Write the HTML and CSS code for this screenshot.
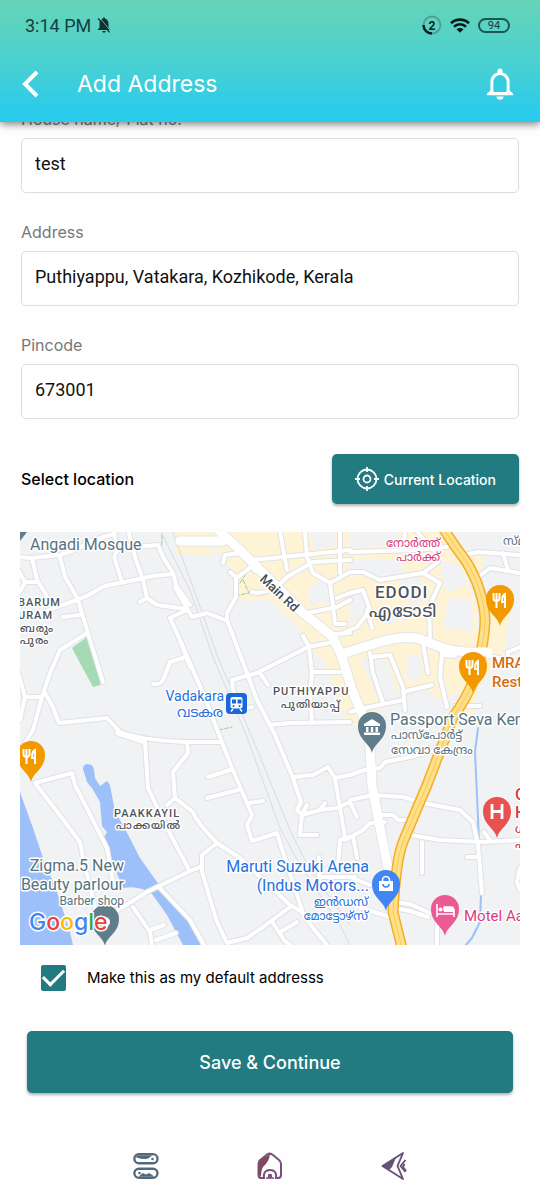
FILE: index.html
```html
<!DOCTYPE html>
<html lang="en">
<head>
<meta charset="utf-8">
<meta name="viewport" content="width=device-width, initial-scale=1">
<title>Add Address</title>
<link rel="stylesheet" href="styles.css">
</head>
<body>
<div class="screen">
  <header class="top">
    <div class="status">
      <span class="time">3:14 PM</span>
      <svg class="muted" viewBox="0 0 14 16" width="14" height="16" aria-hidden="true"><path d="M7 0.500a1.300 1.300 0 0 1 1.300 1.300C10.600 2.600 11.500 4.500 11.500 7v3.500L13.500 13H.5l2-2.500V7c0-2.500 1-4.400 3.200-5.200A1.300 1.300 0 0 1 7 .5ZM5.300 14h3.400a1.700 1.700 0 0 1-3.400 0Z" fill="#12302f"/><path d="M3 1 13.500 14" stroke="#5ed2c1" stroke-width=".8"/><path d="M1.200 1.500 12.500 15.300" stroke="#12302f" stroke-width="1.300"/></svg>
      <span class="status-right">
        <svg viewBox="0 0 20 20" width="20" height="20" aria-hidden="true"><circle cx="10" cy="10" r="8.500" fill="none" stroke="#4d9f97" stroke-width="1.800"/><path d="M1.500 10A8.500 8.500 0 0 0 10 18.500" fill="none" stroke="#0b2020" stroke-width="2.500"/><text class="ring-text" x="10" y="14.500" text-anchor="middle">2</text></svg>
        <svg viewBox="0 0 20 15" width="20" height="15" aria-hidden="true"><g fill="none" stroke="#061818" stroke-width="2.600"><path d="M1 5.200C6 .4 14 .4 19 5.200"/><path d="M4 8.700c3.500-3.200 8.500-3.200 12 0"/></g><path d="M6.500 11.300c2-1.700 5-1.700 7 0L10 14.800Z" fill="#061818"/></svg>
        <span class="battery">94</span>
      </span>
    </div>
    <div class="bar">
      <button class="icon-btn" type="button" aria-label="Back"><svg viewBox="0 0 18 28" width="18" height="28"><path d="M16 2 4 14 16 26" fill="none" stroke="#fff" stroke-width="4"/></svg></button>
      <h1 class="title">Add Address</h1>
      <button class="icon-btn" type="button" aria-label="Notifications"><svg viewBox="0 0 28 32" width="28" height="32"><path d="M6 26V13.500a8 8 0 0 1 16 0V26" fill="none" stroke="#fff" stroke-width="3.200"/><path d="M1 27.200v-1.600l3.500-3h19l3.500 3v1.600Z" fill="#fff"/><path d="M7.600 14a6.400 6.400 0 0 1 12.800 0v10H7.600Z" fill="#33cde2"/><circle cx="14" cy="3" r="2.500" fill="#fff"/><path d="M10.500 28.500h7a3.500 3.300 0 0 1-7 0Z" fill="#fff"/></svg></button>
    </div>
  </header>

  <main class="content">
    <form class="form">
      <div class="field"><label class="label" for="house">House name/ Flat no.</label><input class="input" id="house" type="text" value="test"></div>
      <div class="field"><label class="label" for="address">Address</label><input class="input" id="address" type="text" value="Puthiyappu, Vatakara, Kozhikode, Kerala"></div>
      <div class="field"><label class="label" for="pincode">Pincode</label><input class="input" id="pincode" type="text" value="673001"></div>

      <div class="location">
        <h2 class="location-title">Select location</h2>
        <button class="btn btn-location" type="button">
          <svg viewBox="0 0 24 24" width="24" height="24" fill="none" stroke="#fff" stroke-width="1.800" aria-hidden="true"><circle cx="12" cy="12" r="9.500"/><circle cx="12" cy="12" r="3.500"/><path d="M12 0v5M12 19v5M0 12h5M19 12h5"/></svg>
          Current Location
        </button>
      </div>

      <svg class="map" viewBox="20 532 500 413" role="img" aria-label="Map of Puthiyappu, Vatakara">
        <defs>
          <g id="streets">
            <path d="M18 557 32 558 60 555Q75 551 84 545T115 534M32 558 37 580 48 598M18 570 25 582 37 582M25 582 20 592M60 557 65 577Q73 590 78 600L87 630 103 682M48 610 77 600Q90 595 97 590T120 583L153 576 173 574M63 617 80 615M113 530 118 550Q113 556 115 560L122 582M128 530 135 557 143 580 147 598 140 602M147 598 157 605 187 609M134 547 158 545 163 557 173 573 177 587 190 605M187 610 170 618 180 640 190 667M183 658 170 662 163 680Q160 685 153 684M87 633 60 650 50 673 42 697 33 730 25 743M18 672 25 697 42 697M25 697 20 720M45 693 53 707 59 723 107 718 120 732Q140 740 185 742H220"/>
            <path d="M230 572 236 577V597L227 613V620L247 673 257 700 275 735 293 778 301 802 297 810 302 815 300 835H317M175 587 192 617 207 613 225 620M223 563 225 555 240 553M238 577 252 566M252 707Q245 710 240 703L233 690 232 680 257 673 308 647 333 642M260 673 268 685M303 636 309 647 312 673 310 693 312 723M312 672H340M270 725 290 723 350 722M307 613 337 607 350 600M252 560 283 557 350 550M280 532 287 570M305 532 307 557 313 573 330 583 335 623M252 592Q270 596 287 577L313 562 350 560M340 532V573M330 583 350 572M337 598 350 593M335 634 350 633M335 624H345M250 562 255 571"/>
            <path d="M180 640 203 693 220 737 232 768 252 815 247 825 252 841 277 833 287 865 302 910M208 777 230 770M207 798 238 790M248 803 263 801M187 742 188 753 180 763 173 772 175 798 167 805M175 798 193 812Q195 820 217 843L240 858 290 905 302 912 313 928 327 945M217 843 202 855V872L217 922 227 943 247 938 263 927 290 907M273 923 284 940 290 945M280 932 297 922M293 777 313 775 328 767 335 778 350 775M335 778 340 808 345 837M302 815 320 810 337 808 350 802M302 815 307 805M320 810 325 803M338 865 340 840 350 837M320 877H355M319 857V885"/>
            <path d="M35 783 52 805 80 842 83 858 97 915M35 783 72 773 75 785 107 848 113 882M117 733 143 742M145 742 148 788 167 828 188 868M110 915 147 892 188 872 202 866M133 907 150 932 152 945M150 930 164 925M156 940 176 933M160 888 190 920 204 945"/>
            <path d="M350 552 417 550 447 547M350 572 363 572 380 580 423 573 438 562M423 573 440 583 429 607 430 637M350 593 363 590 370 610 357 627 345 632M402 550 405 533M418 533 438 555M370 653 373 673 383 703M372 657 390 655 403 687 405 710M403 692 432 685M403 700 370 707 350 712M423 643 428 673M442 653 440 677 447 707M445 655 455 656M367 610 372 628M465 555 477 552 520 555M503 553 508 570M478 577 490 568 520 573M520 647 508 652V665M455 706H480M482 655 520 662"/>
            <path d="M350 775 365 770 380 768 385 762 410 757 435 750M350 800 373 795 403 797 423 803 460 810 473 822 478 845 482 893M410 835 440 840 483 842 520 840M422 842V873M467 857H479M382 815H393L398 820H410M345 840 363 830 370 823 385 822M353 836 357 858M350 877 370 885M393 902 410 904 430 913M393 908 410 911 428 917M437 922V945M345 903 390 917M520 868 517 882 520 890M484 832 490 840M350 802 357 817"/>
          </g>
          <g id="avenues"><path d="M180 541H223M218 530 240 550 263 573 303 613 333 637 342 657 352 690 369 730 372 785 380 828 388 868 393 903M345 653 380 642Q400 636 417 638L443 648Q460 653 483 652"/></g>
          <path id="highway" d="M443 528Q456 548 463 557T477 583Q485 605 485 620T477 673Q466 700 453 717L427 785Q410 825 403 842T393 912L402 948"/>
          <path id="marker" d="M0 20C-2 10-14 7-14-7A14 14 0 0 1 14-7C14 7 2 10 0 20Z"/>
        </defs>

        <path class="land" d="M20 532H520V945H20Z"/>
        <g class="built">
          <path d="M176 532H443L462 565 478 610V670L462 692 440 700 423 688H400L375 715 350 728 340 706 330 672 320 660 297 625 270 600H238V575L220 556 176 554Z"/>
          <path d="M472 645 505 640 500 665 480 680 473 720 455 735 462 700ZM465 550 485 555 480 575ZM490 590 510 610 505 650 485 640Z"/>
        </g>
        <g class="land">
          <path d="M206 545 222 552 218 557ZM310 532H336V545L315 550ZM350 532H400L395 545 350 548ZM310 585 325 580 332 602 310 605ZM350 560 400 560 405 575 380 577 350 570ZM350 595 362 592 368 610 350 625ZM400 580 420 577 427 600 412 605 400 595ZM440 560 460 565 467 585 450 592 444 588ZM448 598 472 600 473 632 443 628ZM360 658 388 662 398 700 380 705ZM408 655 420 655 422 680 405 678ZM314 655 325 660V680H314ZM380 614 420 604 422 615 385 625Z"/>
        </g>
        <path class="park" d="M72 648 87 637 101 680 100 685 93 687 80 663Z"/>
        <path class="trail" d="M240 583 247 572M243 580 249 593 239 595M162 535V545M219 730 232 727"/>
        <g class="water">
          <path d="M20 792 33 828 43 858 57 892 70 932 73 945H20Z"/>
          <path d="M83 769Q83 764 88 764T94 770L95 778 100 786 107 781 110 785 115 812 123 825 140 858 157 882 190 920 203 945H183L167 915 152 894Q140 885 123 888L108 852 102 840 107 832 102 826 100 802 92 788 87 782Z"/>
        </g>
        <path class="stream" d="M478 728 475 752 478 818 481 895 480 922 472 938 466 945"/>
        <path class="rail" d="M160 530 190 590 213 657 247 737 280 828 300 865 340 925 350 945M172 530 196 595 217 655 256 747 290 830 310 870 350 925"/>

        <use class="street-edge" href="#streets"/>
        <use class="avenue-edge" href="#avenues"/>
        <use class="street" href="#streets"/>
        <use class="avenue" href="#avenues"/>
        <use class="highway-edge" href="#highway"/>
        <use class="highway" href="#highway"/>
        <use class="highway-line" href="#highway"/>
        <path class="avenue" d="M478 652H488"/>

        <path d="M20 532H27L20 541Z" fill="#607d8b"/>
        <g class="pin-food"><use href="#marker" x="500" y="606"/><use href="#marker" x="473" y="673"/><use href="#marker" x="31" y="762"/></g>
        <g fill="none" stroke="#fff" stroke-width="2">
          <path id="fork" d="M493.500 593v5q0 3 3 3t3-3v-5M496.500 593V608M505 608V594q-3 1-3 8h3"/>
          <use href="#fork" x="-27" y="67"/><use href="#fork" x="-470" y="156"/>
        </g>
        <use href="#marker" x="372" y="733" fill="#607d8b"/>
        <path d="M364 724 372 719 380 724V726H364ZM366 727H368.500V732H366ZM370.800 727H373.200V732H370.800ZM375.500 727H378V732H375.500ZM364 732.500H380V735H364Z" fill="#fff"/>
        <use href="#marker" x="386" y="891" fill="#4285f4"/>
        <path d="M379 881H393V891H379Z" fill="#fff"/><path d="M382.500 881v-1a3.500 3.500 0 0 1 7 0v1" fill="none" stroke="#fff" stroke-width="1.600"/><path d="M383 884a3 3 0 0 0 6 0" fill="none" stroke="#4285f4" stroke-width="1.600"/>
        <use href="#marker" x="497" y="818" fill="#ea5050"/><path d="M492 804V819M502 804V819M492 811.500H502" stroke="#fff" stroke-width="2.800"/>
        <use href="#marker" x="445" y="916" fill="#ec5a95"/><path d="M437 904V917M437 914H454V917M454 914V910H444V907H451Q454 907 454 911" fill="none" stroke="#fff" stroke-width="1.600"/><path d="M444 907H451Q454 908 454 912H444Z" fill="#fff"/><circle cx="440.500" cy="909.500" r="2" fill="#fff"/>
        <use href="#marker" x="105" y="926" fill="#607d8b"/><circle cx="105" cy="922" r="5" fill="#fff"/>
        <rect x="226" y="693" width="21" height="21" rx="4" fill="#1a66dc"/><rect x="230.500" y="697" width="12" height="11.500" rx="2" fill="#fff"/><path d="M232 699.500H236V703.500H232ZM237.500 699.500H241.500V703.500H237.500Z" fill="#1a66dc"/><circle cx="233.500" cy="706" r="1" fill="#1a66dc"/><circle cx="239.500" cy="706" r="1" fill="#1a66dc"/><path d="M233 709 231 711.500M240 709 242 711.500" stroke="#fff" stroke-width="1.500"/>

        <g class="place slate">
          <text x="30" y="550">Angadi Mosque</text>
          <text x="124" y="871" text-anchor="end">Zigma.5 New</text>
          <text x="124" y="890" text-anchor="end">Beauty parlour</text>
          <text class="small" x="124" y="905" text-anchor="end">Barber shop</text>
          <text x="390" y="725">Passport Seva Ken</text>
          <text class="small" x="391" y="739">പാസ്പോർട്ട്</text>
          <text class="small" x="391" y="754">സേവാ കേന്ദ്രം</text>
          <text class="small" x="503" y="545">സ്മാ</text>
        </g>
        <g class="place area">
          <text x="18" y="606">BARUM</text><text x="18" y="619">URAM</text>
          <text x="20" y="632">ബരും</text><text x="20" y="644">പുരം</text>
          <text x="273" y="695">PUTHIYAPPU</text><text x="281" y="708">പുതിയാപ്പ്</text>
          <text x="114" y="817">PAAKKAYIL</text><text x="116" y="829">പാക്കയിൽ</text>
          <text class="big" x="375" y="598">EDODI</text><text class="big" x="369" y="617">എടോടി</text>
        </g>
        <text class="place road-name" transform="translate(259 580) rotate(43)">Main Rd</text>
        <g class="place blue">
          <text class="mid" x="224" y="701" text-anchor="end">Vadakara</text><text class="mid" x="177" y="717">വടകര</text>
          <text x="369" y="872" text-anchor="end">Maruti Suzuki Arena</text>
          <text x="369" y="891" text-anchor="end">(Indus Motors...</text>
          <text class="small" x="368" y="906" text-anchor="end">ഇൻഡസ്</text>
          <text class="small" x="368" y="920" text-anchor="end">മോട്ടോഴ്സ്</text>
        </g>
        <g class="place orange"><text x="492" y="668">MRA</text><text x="492" y="687">Rest</text></g>
        <g class="place red"><text x="515" y="800">G</text><text x="515" y="818">H</text><text class="small" x="515" y="833">ഗ</text><text class="small" x="515" y="848">ഹ</text></g>
        <g class="place pink"><text class="lodging" x="464" y="921">Motel Aaram</text><text class="small" x="440" y="547" text-anchor="end">നോർത്ത്</text><text class="small" x="440" y="561" text-anchor="end">പാർക്ക്</text></g>
        <text class="google" x="29" y="930"><tspan class="g-blue">G</tspan><tspan class="g-red">o</tspan><tspan class="g-yellow">o</tspan><tspan class="g-blue">g</tspan><tspan class="g-green">l</tspan><tspan class="g-red">e</tspan></text>
      </svg>

      <div class="default-row">
        <input class="check" id="default" type="checkbox" checked>
        <label class="check-label" for="default">Make this as my default addresss</label>
      </div>
      <button class="btn btn-save" type="submit">Save &amp; Continue</button>
    </form>
  </main>

  <nav class="system-nav" aria-label="System">
    <button class="icon-btn" type="button" aria-label="Recent apps"><svg viewBox="0 0 24 26" width="26" height="28"><g fill="none" stroke="#526b7c" stroke-width="2.200"><rect x="1.200" y="2" width="21.500" height="8.500" rx="4.200"/><rect x="1.200" y="15.500" width="21.500" height="8.500" rx="4.200"/></g><path d="M3 3H18Q15 6 12 6.500T3 5ZM5 23 9 19.500 12 21 15 19.500 20 23Z" fill="#526b7c"/><circle cx="18" cy="6.500" r="1.200" fill="#526b7c"/><circle cx="6" cy="19.500" r="1.200" fill="#526b7c"/></svg></button>
    <button class="icon-btn" type="button" aria-label="Home"><svg viewBox="0 0 26 28" width="26" height="28"><path d="M2 9 10 2.500Q13 .5 16 3L22 8Q24 9.500 24 12V23Q24 26 21 26H19Q20 18 13 18T7 26H4Q1.500 26 1.500 23V12Q1.500 10 3 8.500Z" fill="none" stroke="#765078" stroke-width="2"/><path d="M2 9 13 2Q12 10 6 15 4 18 4 25L2 23Z" fill="#824857"/><circle cx="13" cy="24" r="2.200" fill="#765078"/><path d="M9 26H17" stroke="#765078" stroke-width="1.500"/></svg></button>
    <button class="icon-btn" type="button" aria-label="Back to previous"><svg viewBox="0 0 26 28" width="26" height="28"><g fill="none" stroke="#665279" stroke-width="1.900" stroke-linejoin="round"><path d="M22 1 1.500 14 22 27 16.500 14Z"/><path d="M24.500 8 19.500 14 24.500 20M23.500 12 22 15 25 19"/></g><path d="M1.500 14 15 5.500 11 15 8 18Z" fill="#665279"/></svg></button>
  </nav>
</div>
</body>
</html>
```

FILE: styles.css
```css
* { box-sizing: border-box; }
body { margin: 0; background: #fff; color: #000; font-family: Inter, "Open Sans", sans-serif; }
button { font: inherit; color: inherit; border: 0; cursor: pointer; }
svg { display: block; }
.screen { min-height: 100vh; display: flex; flex-direction: column; background: #fefefe; }

.top { position: sticky; top: 0; z-index: 1; padding-bottom: 12px; background: linear-gradient(#66d4b7, #4bd1d0 50%, #2bcbec 92%); box-shadow: 0 2px 8px rgba(0, 0, 0, .5); }
.status { display: flex; align-items: center; height: 50px; padding: 0 30px 0 25px; gap: 6px; font-family: Roboto, sans-serif; font-size: 18px; color: #12403e; }
.status-right { display: flex; align-items: center; gap: 8px; margin-left: auto; }
.ring-text { font: 700 12px Roboto, sans-serif; fill: #0b2020; }
.battery { width: 32px; height: 15px; border: 2px solid #1a5551; border-radius: 8px; font-size: 11px; line-height: 11px; text-align: center; }
.bar { display: flex; align-items: center; height: 60px; padding: 8px 26px 0 21px; }
.title { flex: 1; margin: 0 0 0 38px; font-size: 23px; font-weight: 400; line-height: 32px; color: #fff; }
.icon-btn { padding: 0; background: none; }

.content { margin-top: -15px; padding: 0 20px; }
.form { display: flex; flex-direction: column; }
.field { display: flex; flex-direction: column; gap: 7px; margin: 0 1px 27px; }
.label { font-size: 16px; line-height: 24px; color: #777; }
.input { width: 100%; height: 55px; padding: 0 13px 4px; border: 1px solid #ddd; border-radius: 5px; background: #fff; font-family: Roboto, sans-serif; font-size: 18px; color: #111; }
.location { display: flex; align-items: center; justify-content: space-between; margin: 8px 1px 28px; }
.location-title { margin: 0; font-size: 16px; font-weight: 500; line-height: 24px; }
.btn { background: #237b82; color: #fff; border-radius: 5px; box-shadow: 0 2px 3px rgba(0, 0, 0, .3); font-weight: 500; }
.btn-location { display: flex; align-items: center; justify-content: center; gap: 5px; height: 50px; padding: 0 23px; font-size: 14px; }
.default-row { display: flex; align-items: center; gap: 21px; margin: 20px 21px 0; }
.check { appearance: none; width: 25px; height: 26px; margin: 0; border-radius: 2px; background: #237b82; display: grid; place-items: center; }
.check:checked::before { content: ""; width: 18px; height: 9px; margin-bottom: 6px; border: solid #fff; border-width: 0 0 3px 3px; rotate: -45deg; }
.check-label { font-size: 15px; line-height: 24px; }
.btn-save { height: 62px; margin: 40px 7px 0; font-size: 18px; }
.system-nav { display: flex; justify-content: center; align-items: center; gap: 98px; margin-top: auto; padding: 20px 0; }

.map { width: 100%; height: auto; overflow: hidden; }
.land { fill: #f0f2f4; }
.built { fill: #fef3d5; }
.park { fill: #a5dab5; }
.water { fill: #9dc0fa; }
.stream, .rail, .trail, .street, .street-edge, .avenue, .avenue-edge, .highway, .highway-edge, .highway-line { fill: none; stroke-linejoin: round; stroke-linecap: round; }
.stream { stroke: #9dc0fa; stroke-width: 2; }
.trail { stroke: #8fd0a5; stroke-width: 1; stroke-dasharray: 4 2; }
.rail { stroke: #d9dbde; stroke-width: 1; }
.street-edge { stroke: #dfe1e5; stroke-width: 6; }
.street { stroke: #fff; stroke-width: 4; }
.avenue-edge { stroke: #e3e5e8; stroke-width: 11; }
.avenue { stroke: #fff; stroke-width: 9; }
.highway-edge { stroke: #f4ae24; stroke-width: 11; }
.highway { stroke: #fee08a; stroke-width: 8; }
.highway-line { stroke: #f8c95a; stroke-width: 1; }
.pin-food { fill: #f29900; }
.place { font-family: Roboto, "Noto Sans Malayalam", "Noto Sans", sans-serif; font-size: 16px; paint-order: stroke; stroke: #fff; stroke-width: 3px; stroke-linejoin: round; }
.slate { fill: #567380; }
.area { font-size: 11px; font-weight: 500; fill: #50545a; letter-spacing: 1px; }
.big { font-size: 17px; }
.small { font-size: 12px; }
.mid { font-size: 14px; }
.lodging, .orange { font-size: 15px; }
.road-name { font-size: 13px; font-weight: 500; fill: #444a50; }
.blue { fill: #2870de; }
.orange { fill: #d56a10; font-weight: 500; }
.red { fill: #d93a3a; font-weight: 500; }
.pink { fill: #dc3b80; }
.google { font: 500 23px Inter, sans-serif; paint-order: stroke; stroke: #fff; stroke-width: 3px; stroke-linejoin: round; }
.g-blue { fill: #4285f4; }
.g-red { fill: #ea4335; }
.g-yellow { fill: #fbbc05; }
.g-green { fill: #34a853; }
```
